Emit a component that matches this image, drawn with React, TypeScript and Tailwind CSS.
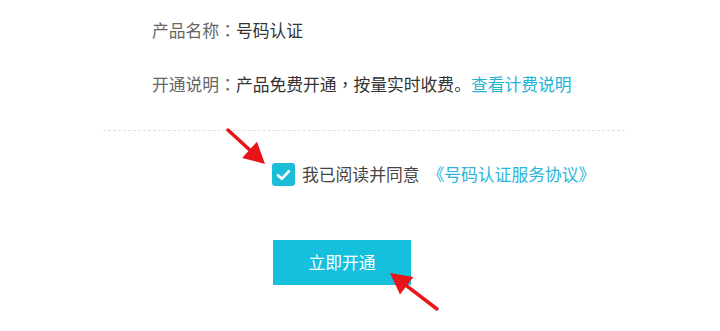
import React from 'react';

const font = { fontFamily: '"Noto Sans CJK SC", "Noto Sans", sans-serif' };

// centered full-width punctuation, as in the reference
function P({ c }: { c: string }) {
  return <span style={{ fontFamily: '"Noto Sans CJK TC", sans-serif' }}>{c}</span>;
}

function Arrow({ x1, y1, x2, y2 }: { x1: number; y1: number; x2: number; y2: number }) {
  const ang = Math.atan2(y2 - y1, x2 - x1);
  const len = 21;
  const wid = 11;
  const bx = x2 - Math.cos(ang) * len;
  const by = y2 - Math.sin(ang) * len;
  const px = -Math.sin(ang) * wid;
  const py = Math.cos(ang) * wid;
  return (
    <g>
      <line x1={x1} y1={y1} x2={bx} y2={by} stroke="#e8141a" strokeWidth={3.5} strokeLinecap="round" />
      <polygon points={`${x2},${y2} ${bx + px},${by + py} ${bx - px},${by - py}`} fill="#e8141a" />
    </g>
  );
}

export default function App() {
  return (
    <div className="relative h-[331px] w-[720px] overflow-hidden bg-white" style={font}>
      <div className="flex flex-col">
        <div className="flex h-[60px] items-center pl-[152px] text-[16.8px] leading-none">
          <span className="text-[#666]">产品名称<P c="：" /></span>
          <span className="text-[#333]">号码认证</span>
        </div>
        <div className="flex h-[48px] items-center pl-[152px] text-[16.8px] leading-none">
          <span className="text-[#666]">开通说明<P c="：" /></span>
          <span className="text-[#333]">产品免费开通<P c="，" />按量实时收费。</span>
          <span className="text-[#1fb3d6]">查看计费说明</span>
        </div>
        <div className="mt-[22px] ml-[103px] w-[522px] border-t border-dashed border-[#e0e0e0]" />
        <div className="mt-[32px] flex items-center pl-[272px] text-[16.8px] leading-none">
          <span className="flex h-[23px] w-[23px] items-center justify-center rounded-[3px] bg-[#1bbdd9]">
            <svg width="15" height="12" viewBox="0 0 15 12">
              <path d="M2 6.2 L5.8 9.8 L13 2.2" fill="none" stroke="#fff" strokeWidth="2.6" strokeLinecap="round" strokeLinejoin="round" />
            </svg>
          </span>
          <span className="ml-[7px] text-[#444]">我已阅读并同意</span>
          <span className="ml-[8px] text-[#2bb5d8]">《号码认证服务协议》</span>
        </div>
        <div className="mt-[54px] pl-[273px]">
          <button className="h-[45px] w-[138px] bg-[#14c0dc] text-[16.8px] text-white">立即开通</button>
        </div>
      </div>
      <svg className="pointer-events-none absolute inset-0" width="720" height="331">
        <Arrow x1={228} y1={130} x2={265} y2={164} />
        <Arrow x1={437} y1={309} x2={390} y2={273} />
      </svg>
    </div>
  );
}
